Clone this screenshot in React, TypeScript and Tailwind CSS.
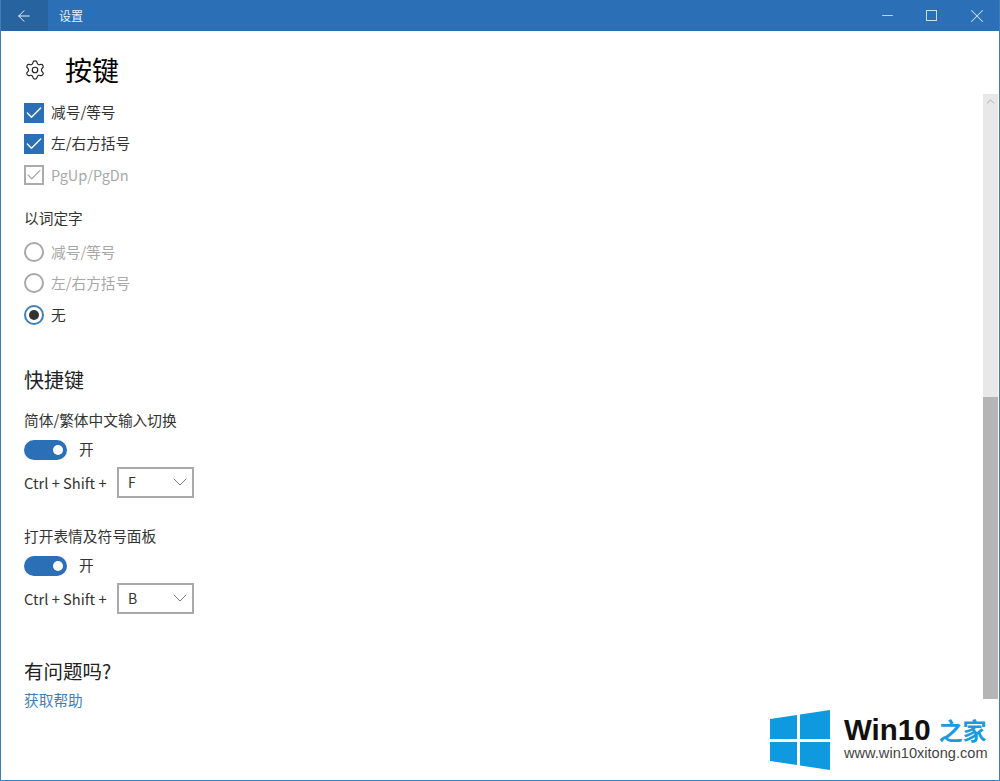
import { ArrowLeft, Check, ChevronDown, ChevronUp, Minus, Settings, X } from "lucide-react";

const font = { fontFamily: '"Noto Sans CJK SC", "Open Sans", sans-serif' };
const latin = { fontFamily: '"Liberation Sans", sans-serif' };

function CheckRow({ label, disabled }: { label: string; disabled?: boolean }) {
  return (
    <div className="flex h-[31px] items-center gap-[7px]">
      <div
        className={
          disabled
            ? "flex h-5 w-5 items-center justify-center border-2 border-[#ababab] bg-white text-[#ababab]"
            : "flex h-5 w-5 items-center justify-center bg-[#2b70b6] text-white"
        }
      >
        <Check size={disabled ? 18 : 20} strokeWidth={1.6} className="shrink-0" />
      </div>
      <span className={disabled ? "text-[14.5px] text-[#a8a8a8]" : "text-[14.7px] text-[#333]"}>{label}</span>
    </div>
  );
}

function RadioRow({ label, checked }: { label: string; checked?: boolean }) {
  return (
    <div className="flex h-[31.5px] items-center gap-[7px]">
      <div
        className={
          checked
            ? "flex h-5 w-5 items-center justify-center rounded-full border-2 border-[#3f7fb9]"
            : "h-5 w-5 rounded-full border-2 border-[#a8a8a8]"
        }
      >
        {checked && <div className="h-[10px] w-[10px] rounded-full bg-[#333]" />}
      </div>
      <span className={checked ? "text-[14.7px] text-[#333]" : "text-[14.7px] text-[#a8a8a8]"}>{label}</span>
    </div>
  );
}

function Shortcut({ title, letter }: { title: string; letter: string }) {
  return (
    <div className="flex flex-col">
      <div className="h-[23px] text-[14.7px] leading-[21px] text-[#333]">{title}</div>
      <div className="mt-[8px] flex h-5 items-center">
        <div className="flex h-5 w-[43px] items-center justify-end rounded-full bg-[#2b70b6] pr-[4px]">
          <div className="h-[10px] w-[10px] rounded-full bg-white" />
        </div>
        <span className="ml-[12px] text-[14.7px] text-[#333]">开</span>
      </div>
      <div className="mt-[7px] flex items-center">
        <span className="w-[93px] pt-[3px] text-[14.7px] text-[#333]">Ctrl + Shift +</span>
        <div className="flex h-[31px] w-[77px] items-center justify-between border-2 border-[#a9a9a9] pl-[9px]">
          <span className="text-[14px] text-[#333]">{letter}</span>
          <ChevronDown size={24} strokeWidth={1} className="text-[#777]" />
        </div>
      </div>
    </div>
  );
}

export default function App() {
  return (
    <div className="relative flex h-[781px] w-[1000px] flex-col overflow-hidden border-x border-b border-[#3f7fb9] bg-white" style={font}>
      {/* title bar */}
      <div className="flex h-[31px] shrink-0 items-center bg-[#2b70b6] text-white">
        <div className="flex h-full w-[47px] items-center justify-center bg-[#27649f] pr-[2px]">
          <ArrowLeft size={18} strokeWidth={1.2} />
        </div>
        <span className="ml-[11px] text-[12px] text-[#e6f0f8]">设置</span>
        <div className="ml-auto flex h-full items-center text-[#c9dff1]">
          <div className="flex w-[44px] justify-center"><Minus size={17} strokeWidth={1.3} /></div>
          <div className="flex w-[45px] justify-center">
            <div className="h-[11px] w-[11px] border border-[#c9dff1]" />
          </div>
          <div className="flex w-[45px] justify-center"><X size={22} strokeWidth={1.1} /></div>
        </div>
      </div>

      <div className="flex flex-1">
        <div className="flex-1 pl-[23px]">
          <div className="flex h-[66px] items-center pt-[11px]">
            <Settings size={22} strokeWidth={1.3} className="text-[#222]" />
            <h1 className="ml-[19px] text-[27px] leading-none font-normal text-black">按键</h1>
          </div>

          <CheckRow label="减号/等号" />
          <CheckRow label="左/右方括号" />
          <CheckRow label="PgUp/PgDn" disabled />

          <div className="mt-[16px] mb-[7px] h-[23px] text-[14.7px] leading-[23px] text-[#333]">以词定字</div>
          <RadioRow label="减号/等号" />
          <RadioRow label="左/右方括号" />
          <RadioRow label="无" checked />

          <h2 className="mt-[34px] mb-[14px] h-[30px] text-[20px] leading-[30px] font-normal text-[#222]">快捷键</h2>
          <Shortcut title="简体/繁体中文输入切换" letter="F" />
          <div className="h-[27px]" />
          <Shortcut title="打开表情及符号面板" letter="B" />

          <h2 className="mt-[42px] h-[30px] text-[19.5px] leading-[30px] font-normal text-[#222]">有问题吗?</h2>
          <div className="mt-[3px] text-[14.7px] text-[#3f7fb9]">获取帮助</div>
        </div>

        {/* scrollbar */}
        <div className="mt-[63px] mr-px flex h-[605px] w-[15px] flex-col bg-[#e8e8e8]">
          <div className="flex h-[15px] items-center justify-center text-[#a0a0a0]">
            <ChevronUp size={13} strokeWidth={1.5} />
          </div>
          <div className="mt-[288px] flex-1 bg-[#b5b5b5]" />
        </div>
      </div>

      {/* watermark */}
      <div className="absolute right-0 bottom-0 flex h-[81px] w-[247px] items-center bg-white pl-[18px]">
        <svg width="60" height="60" viewBox="0 0 60 60">
          <path d="M0 9 L27 5 V29 H0 Z M30 4.5 L60 0 V29 H30 Z M0 32 H27 V55 L0 51 Z M30 32 H60 V60 L30 55.5 Z" fill="#0f9ae0" />
        </svg>
        <div className="ml-[14px] flex flex-col pb-[3px]">
          <div className="flex items-center" style={latin}>
            <span className="text-[29.5px] leading-[30px] font-bold text-[#111]">Win10</span>
            <span className="ml-[8px] text-[24px] leading-[30px] font-bold text-[#1a9be0]" style={font}>之家</span>
          </div>
          <span className="text-[14.6px] leading-[16px] text-[#444]" style={latin}>www.win10xitong.com</span>
        </div>
      </div>
    </div>
  );
}
